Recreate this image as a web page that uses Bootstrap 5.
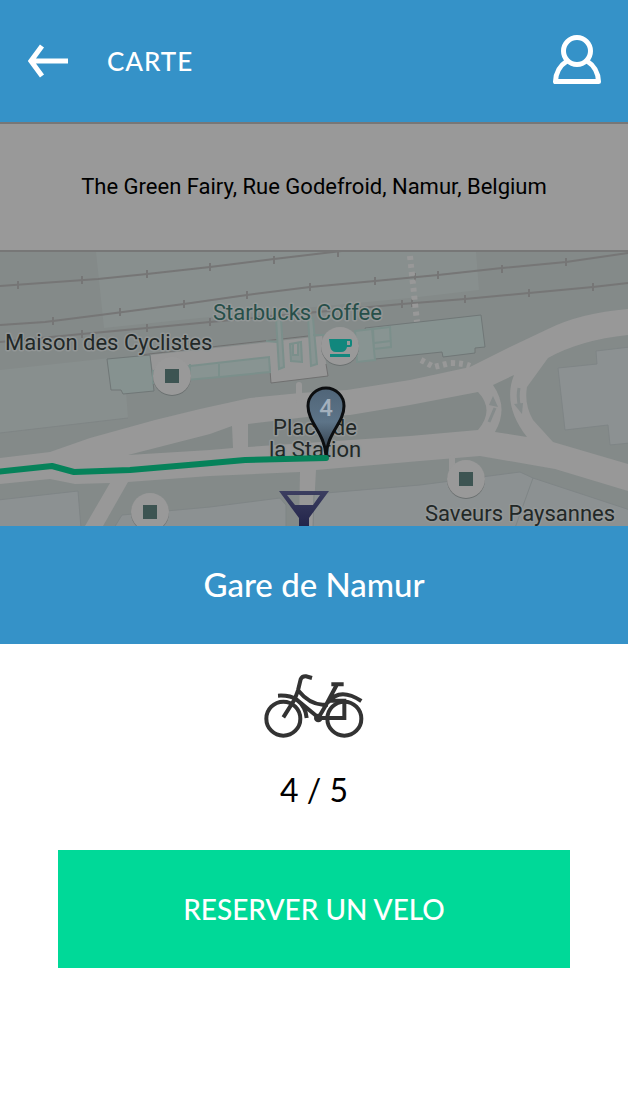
<!DOCTYPE html>
<html lang="fr">
<head>
<meta charset="utf-8">
<meta name="viewport" content="width=device-width, initial-scale=1">
<title>Carte</title>
<link href="https://cdn.jsdelivr.net/npm/bootstrap@5.3.0/dist/css/bootstrap.min.css" rel="stylesheet">
<style>
  body { font-family: Lato, "Liberation Sans", sans-serif; color: #000; background: #fff; }
  .bar-blue { background: #3592c8; color: #fff; }
  .topbar { height: 122px; padding: 0 26px 4px 28px; }
  .topbar-title { font-size: 26px; line-height: 32px; letter-spacing: 1px; margin-left: 39px; padding-top: 4px; font-weight: 500; }
  .address { background: #999; border-top: 2px solid #777; border-bottom: 2px solid #777; height: 130px; font: 22px/32px Roboto, sans-serif; }
  .map { background: #848a89; }
  .map text { font-family: Roboto, sans-serif; font-size: 22px; paint-order: stroke; stroke: #939797; stroke-width: 3px; stroke-linejoin: round; }
  .map .pin-count { font-size: 24px; font-weight: 500; fill: #a3b0bd; stroke: none; }
  .station { height: 118px; font-size: 33px; line-height: 40px; padding-bottom: 2px; font-weight: 500; }
  .stock { font-size: 32px; line-height: 40px; }
  .details { padding: 30px 58px; }
  .btn-reserve, .btn-reserve:hover { background: #00d998; color: #fff; border: 0; border-radius: 0; height: 118px; font-size: 28px; font-weight: 500; margin-top: 40px; }
</style>
</head>
<body>
<header class="bar-blue topbar d-flex align-items-center">
  <a href="#" class="d-flex pt-1" aria-label="Retour">
    <svg width="40" height="34" viewBox="0 0 40 34" fill="none" stroke="#fff" stroke-width="5"><path d="M14 2 3 17 14 32M3 17H40"/></svg>
  </a>
  <h1 class="topbar-title mb-0">CARTE</h1>
  <a href="#" class="ms-auto d-flex" aria-label="Profil">
    <svg width="50" height="50" viewBox="0 0 50 50" fill="none" stroke="#fff" stroke-width="5" stroke-linejoin="round"><circle cx="25" cy="17" r="13.5"/><path d="M15 27Q4 34 3.500 47.500H46.500Q46 34 35 27"/></svg>
  </a>
</header>
<main>
  <div class="address d-flex align-items-center justify-content-center text-center">The Green Fairy, Rue Godefroid, Namur, Belgium</div>
  <svg class="map d-block w-100" viewBox="0 252 628 274" role="img" aria-label="Plan">
    <defs>
      <linearGradient id="funnel" x1="0" y1="0" x2="0" y2="1"><stop offset="0" stop-color="#3c3e60"/><stop offset="1" stop-color="#22244a"/></linearGradient>
      <linearGradient id="pin" x1="0" y1="0" x2="0" y2="1"><stop offset="0" stop-color="#506578"/><stop offset=".5" stop-color="#5d7488"/><stop offset="1" stop-color="#2c3640"/></linearGradient>
    </defs>
    <!-- ground blocks -->
    <path fill="#888f8e" d="M96 252H476L479 290 410 298 200 318 104 328ZM0 370 110 358 125 378 128 418 0 433Z"/>
    <path fill="none" stroke="#7f8585" d="M0 433 128 418"/>
    <!-- railway tracks -->
    <g fill="none" stroke="#767676" stroke-width="2">
      <path d="M0 286 98 279 147 274 210 267 274 259 350 250M0 325 45 322 100 315 184 304 247 295 310 287 375 281 438 275 502 268 566 262 628 253M0 342 82 334 147 328 210 322 402 304 465 299 529 293 593 287 628 283"/>
      <path d="M18 281v8M82 276v8M147 270v8M210 263v8M274 256v8M338 249v8M53 317v8M120 308v8M184 300v8M247 291v8M310 283v8M375 277v8M415 273v8M438 271v8M502 265v8M566 258v8M82 330v8M147 324v8M210 318v8M402 300v8M412 299v8M465 295v8M529 289v8M593 283v8"/>
    </g>
    <!-- roads -->
    <path fill="#989898" d="M0 458 50 452 90 438 155 420 200 409 250 398 300 393 347 390 410 380 470 367 510 347 548 329Q580 313 628 309V335Q580 340 548 358L527 387Q524 404 533 420L553 442 628 464V491L555 469 480 456 420 461 316 470 313 526H299L300 472 210 476 128 482 103 526H85L110 483 75 484 50 479 0 484Z"/>
    <path fill="#828887" d="M128 455 210 434 232 426 233 448 210 450ZM248 424 307 417 350 415 410 405 478 392Q495 410 478 430L410 436 248 447ZM493 385 514 375Q502 405 527 437L495 432Q509 408 493 385Z"/>
    <path fill="none" stroke="#858b8b" stroke-width="3" d="M489 422 495 408M519 388Q517 398 520 408"/>
    <path fill="#858b8b" d="m493 396 5 11-9-2ZM514 404l9-1-1 11Z"/>
    <path fill="none" stroke="#989898" stroke-width="6" stroke-linecap="round" d="M299 385V400M452 458V476"/>
    <path fill="none" stroke="#989898" stroke-width="6" stroke-dasharray="4 4" d="M410 256 417 322M421 360 434 367 450 363Q463 363 470 366"/>
    <!-- station -->
    <path fill="#979797" d="M150 355 269 342 322 336 328 376 271 383 269 357 153 372Z"/>
    <path fill="#869290" stroke="#707777" d="M107 359 150 355 154 391 123 394 121 390H111ZM365 328 410 323 481 315 485 347 475 348V353L443 357 442 352 375 359Z"/>
    <path fill="none" stroke="#707070" d="M140 355 308 336M269 357 271 383 328 376 326 364"/>
    <g fill="#889492" stroke="#7b8f8b" stroke-width="2">
      <path d="M153 371 190 366 269 357 270 372 220 377 153 383ZM190 364V380M219 362V377M276 318H281L284 367 279 369ZM308 317 313 318 317 364 311 366ZM266 341 277 342M313 335H325M290 344 301 342 302 362 291 361ZM293 344V355H298V343M355 331 372 329 375 360 357 362ZM373 329 390 327 391 347 374 349ZM374 343 391 341"/>
    </g>
    <!-- southern and eastern buildings -->
    <path fill="#8c9192" stroke="#7f8586" d="M-2 500 78 491 81 528H-2ZM114 528 122 515 210 507 280 498 286 505V528ZM313 528 314 494 420 485 520 472 533 478 630 510V528ZM533 478 515 528M558 368 597 364 596 351 630 347V443L610 445 608 425 565 430Z"/>
    <!-- place markers -->
    <g fill="#6b7070"><circle cx="172" cy="377" r="19"/><circle cx="340" cy="347" r="19"/><circle cx="466" cy="480" r="19"/><circle cx="150" cy="513" r="19"/></g>
    <g fill="#999"><circle cx="172" cy="376" r="19"/><circle cx="340" cy="346" r="19"/><circle cx="466" cy="479" r="19"/><circle cx="150" cy="512" r="19"/></g>
    <path fill="#3d5452" d="M165 369h14v14h-14ZM459 472h14v14h-14ZM143 505h14v14h-14Z"/>
    <path fill="#11877d" fill-rule="evenodd" d="M329 339H350Q352 339 352 341V345Q352 347 350 347H347Q346 352 341 352H336Q331 352 330 346ZM347 341V345H350V341ZM330 354H350V357H330Z"/>
    <!-- labels -->
    <text x="213" y="320" fill="#274f49">Starbucks Coffee</text>
    <text x="5" y="350" fill="#222827">Maison des Cyclistes</text>
    <text x="425" y="521" fill="#222827">Saveurs Paysannes</text>
    <text x="315" y="435" fill="#222827" text-anchor="middle">Place de</text>
    <text x="315" y="457" fill="#222827" text-anchor="middle">la Station</text>
    <!-- current position pin and route -->
    <path fill="url(#pin)" stroke="#0c0e10" stroke-width="3" d="M326 456C325 433 308 423 308 406A18 18 0 0 1 344 406C344 423 327 433 326 456Z"/>
    <path fill="none" stroke="#06825a" stroke-width="6" stroke-linecap="round" stroke-linejoin="round" d="M-4 472 52 466 74 472 130 470 200 464 245 460 326 458"/>
    <text class="pin-count" x="326" y="416" text-anchor="middle">4</text>
    <path fill="url(#funnel)" fill-rule="evenodd" d="M279 491H329L309 518V527H299V518ZM287 495 295 505H313L320 495Z"/>
  </svg>
  <section>
    <h2 class="bar-blue station d-flex align-items-center justify-content-center mb-0">Gare de Namur</h2>
    <div class="details d-flex flex-column align-items-center">
      <svg width="100" height="64" viewBox="74 42 300 192" fill="none" stroke="#333" stroke-width="12" role="img" aria-label="Vélo">
        <circle cx="132" cy="176" r="51"/><circle cx="315" cy="176" r="51"/>
        <path d="M132 172 166 118 176 91 184 58Q188 48 200 49L218 54M116 107Q152 105 172 119L236 172M176 91Q210 133 250 134H266M292 75 260 135 237 174H315V122H268M276 73H313M266 128Q300 80 366 123M171 118Q199 139 202 174"/>
        <circle cx="237" cy="174" r="13" fill="#333" stroke="none"/>
      </svg>
      <p class="stock mb-0 mt-4 pt-2">4 / 5</p>
      <button type="button" class="btn btn-reserve w-100">RESERVER UN VELO</button>
    </div>
  </section>
</main>
<script src="https://cdn.jsdelivr.net/npm/bootstrap@5.3.0/dist/js/bootstrap.bundle.min.js"></script>
</body>
</html>
